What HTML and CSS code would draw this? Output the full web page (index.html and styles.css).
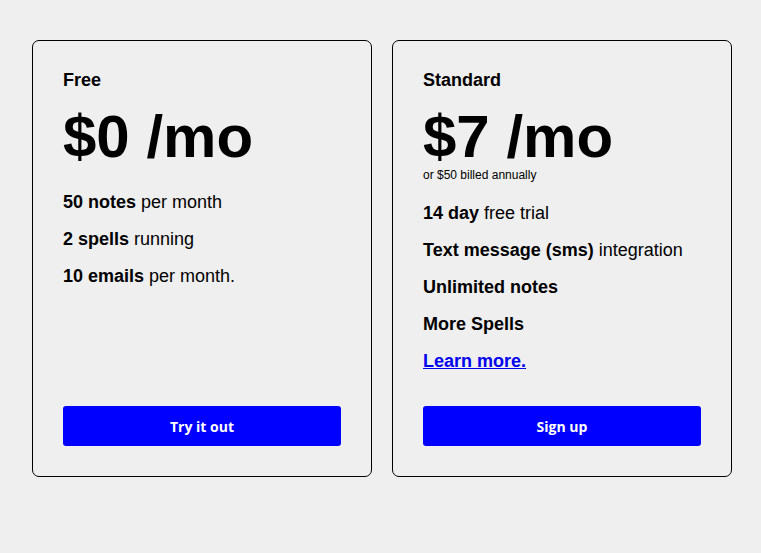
FILE: index.html
```html
<!DOCTYPE html>
<html lang="en">
<head>
<meta charset="utf-8">
<title>Pricing</title>
<link rel="stylesheet" href="styles.css">
</head>
<body>
<main class="plans">
  <section class="card">
    <h2 class="plan-name">Free</h2>
    <p class="price">$0 /mo</p>
    <ul class="features">
      <li><strong>50 notes</strong> per month</li>
      <li><strong>2 spells</strong> running</li>
      <li><strong>10 emails</strong> per month.</li>
    </ul>
    <button class="cta" type="button">Try it out</button>
  </section>
  <section class="card">
    <h2 class="plan-name">Standard</h2>
    <p class="price">$7 /mo</p>
    <p class="price-note">or $50 billed annually</p>
    <ul class="features">
      <li><strong>14 day</strong> free trial</li>
      <li><strong>Text message (sms)</strong> integration</li>
      <li><strong>Unlimited notes</strong></li>
      <li><strong>More Spells</strong></li>
      <li><a class="more" href="#">Learn more.</a></li>
    </ul>
    <button class="cta" type="button">Sign up</button>
  </section>
</main>
</body>
</html>
```
FILE: styles.css
```css
html, body {
  margin: 0;
  padding: 0;
  background: #efefef;
}

body {
  font-family: "Liberation Sans", Arial, sans-serif;
  color: #000;
}

.plans {
  display: flex;
  gap: 20px;
  padding: 40px 0 40px 32px;
  align-items: stretch;
}

.card {
  box-sizing: border-box;
  flex: 0 0 340px;
  width: 340px;
  border: 1px solid #000;
  border-radius: 7px;
  padding: 30px;
  display: flex;
  flex-direction: column;
  background: #efefef;
}

.plan-name {
  margin: 0;
  font-size: 18px;
  line-height: 18px;
  font-weight: bold;
}

.price {
  margin: 18px 0 0;
  font-size: 60px;
  line-height: 60px;
  font-weight: bold;
}

.price-note {
  margin: 1px 0 -4px;
  font-size: 12px;
  line-height: 14px;
}

.features {
  list-style: none;
  margin: 25px 0 34px;
  padding: 0;
  display: flex;
  flex-direction: column;
  gap: 16px;
  font-size: 18px;
  line-height: 21px;
}

.more {
  color: #0000ee;
  font-weight: bold;
  text-decoration: underline;
}

.cta {
  margin-top: auto;
  height: 40px;
  width: 100%;
  border: none;
  border-radius: 3px;
  background: #0000ff;
  color: #fff;
  font-family: "Open Sans", sans-serif;
  font-size: 14px;
  font-weight: bold;
  cursor: pointer;
}
```
